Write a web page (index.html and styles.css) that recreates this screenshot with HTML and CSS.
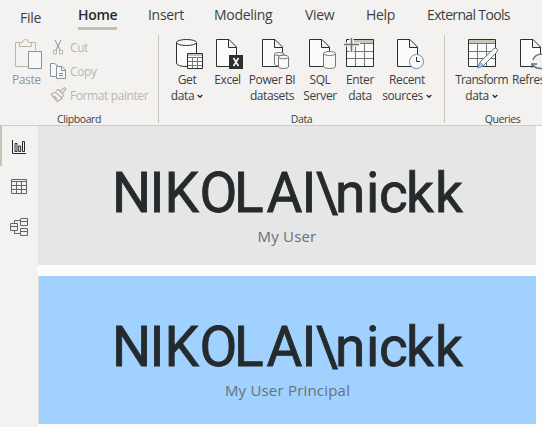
FILE: index.html
```html
<!DOCTYPE html>
<html lang="en">
<head>
<meta charset="utf-8">
<title>Report</title>
<link rel="stylesheet" href="styles.css">
</head>
<body>
<nav class="tabs">
  <span class="file">File</span><span class="active">Home</span><span>Insert</span><span>Modeling</span><span>View</span><span>Help</span><span class="tight">External Tools</span>
</nav>
<section class="ribbon">
  <div class="group clipboard">
    <div class="tools">
      <div class="button paste">
        <svg width="52" height="32" viewBox="0 38 52 32"><path class="muted" d="M21 42.500H15.500V66.500H28M30 42.500H35.500V50"/><path class="muted" d="M19.500 46.500V42.500H22.500Q22.500 39.500 25.500 39.500T28.500 42.500H31.500V46.500Z"/><path class="slate" d="M28.500 51.500H41.500V68.500H28.500Z"/></svg>
        <span>Paste</span>
      </div>
      <div class="commands">
        <div><svg width="20" height="20" viewBox="49 38 20 20"><path class="slate" d="M55 40L60.500 51M61 40L55.500 51"/><path class="muted" d="M53.500 50.500H56.500V54H53.500ZM59.500 50.500H62.500V54H59.500Z"/></svg>Cut</div>
        <div><svg width="20" height="20" viewBox="49 62 20 20"><path class="slate" d="M56 76.500H50.500V63.500H54.500L58 66M56.500 66.500H62L65.500 70V78.500H56.500ZM61.500 66.500V70.500H65M59 73.500H63M59 75.500H63"/></svg>Copy</div>
        <div><svg width="20" height="20" viewBox="49 86 20 20"><path class="muted thick" d="M51 94.500L55 92L62 98L57.500 101.500ZM54 96L57 99M56 91L58.500 89.500L63.500 95L62 97.500M60 91L64.500 87.500L66 89L62.500 93"/></svg>Format painter</div>
      </div>
    </div>
    <div class="caption">Clipboard</div>
  </div>
  <div class="group data">
    <div class="tools">
      <div class="button"><svg width="42" height="32" viewBox="166 38 42 32"><path class="paper" d="M176.500 42.500V63Q177 66.500 187 66.500L196.500 64V42.500"/><ellipse class="paper" cx="186.500" cy="42.500" rx="10" ry="3"/><path class="paper" d="M187.500 53.500H202.500V68.500H187.500Z"/><path class="bar" d="M188 54H202V56H188Z"/><path class="gray" d="M188 57.500H202M188 61.500H202M188 65.500H202M192.500 57V68M197.500 57V68"/></svg><span>Get</span><span>data<svg class="chev" viewBox="0 0 6 5"><path d="M.7 1L3 3.300L5.300 1"/></svg></span></div>
      <div class="button"><svg width="39" height="32" viewBox="208 38 39 32"><path class="paper" d="M216.500 39.500H229L236.500 47V66.500H216.500ZM228.500 39.500V47.500H236"/><path class="excel" d="M229 55H243V69H229Z"/><path class="cross" d="M233.500 58L238.500 66M238.500 58L233.500 66"/></svg><span>Excel</span></div>
      <div class="button"><svg width="50" height="32" viewBox="247 38 50 32"><path class="paper" d="M262.500 39.500H275L282.500 47V66.500H262.500ZM274.500 39.500V47.500H282"/><path class="cyl" d="M274.500 54V64Q275 66 279 66H284V54"/><ellipse class="cyl" cx="279.300" cy="54" rx="4.800" ry="1.500"/><path class="cyl" d="M278.500 57V67Q279 68.500 283.500 68.500T288.500 67V57"/><ellipse class="cyl" cx="283.500" cy="57" rx="5" ry="1.800"/></svg><span>Power BI</span><span>datasets</span></div>
      <div class="button"><svg width="46" height="32" viewBox="297 38 46 32"><path class="paper" d="M309.500 39.500H322L329.500 47V66.500H309.500ZM321.500 39.500V47.500H329"/><path class="cyl" d="M323.500 53.500V66.500Q324 68.500 329.500 68.500T335.500 66.500V53.500"/><ellipse class="cyl" cx="329.500" cy="53.500" rx="6" ry="2"/></svg><span>SQL</span><span>Server</span></div>
      <div class="button"><svg width="34" height="32" viewBox="343 38 34 32"><path class="paper" d="M346.500 39.500H373.500V66.500H346.500Z"/><path class="bar" d="M354 40H373V43H354Z"/><path class="gray" d="M347 51.500H373M347 58.500H373M355.500 44V66M364.500 44V66M354 43.500H373"/><path class="halo" d="M351.500 37V52M344 44.500H360"/><path class="plus" d="M351.500 38V52M344 44.500H359"/></svg><span>Enter</span><span>data</span></div>
      <div class="button"><svg width="60" height="32" viewBox="377 38 60 32"><path class="paper" d="M397.500 39.500H410L417.500 47V66.500H397.500ZM409.500 39.500V47.500H417"/><circle class="clock" cx="416.500" cy="61.500" r="7"/><path class="ink" d="M416.500 57V61.500H420"/></svg><span>Recent</span><span>sources<svg class="chev" viewBox="0 0 6 5"><path d="M.7 1L3 3.300L5.300 1"/></svg></span></div>
    </div>
    <div class="caption">Data</div>
  </div>
  <div class="group queries">
    <div class="tools">
      <div class="button"><svg width="60" height="32" viewBox="451 38 60 32"><path class="paper" d="M467.500 39.500H494.500V66.500H467.500Z"/><path class="bar" d="M468 40H494V43H468Z"/><path class="gray" d="M468 43.500H494M468 51.500H494M468 58.500H494M476.500 44V66M485.500 44V66"/><path class="pencil" d="M477 68L479 62L493 48.500Q495 47.500 496 49T496 52L482.500 65.500Z"/><path class="tip" d="M477 68L479 62L482.500 65.500Z"/></svg><span class="tight">Transform</span><span>data<svg class="chev" viewBox="0 0 6 5"><path d="M.7 1L3 3.300L5.300 1"/></svg></span></div>
      <div class="button refresh"><svg width="30" height="32" viewBox="512 38 30 32"><path class="paper" d="M520.500 39.500H533L540.500 47V66.500H520.500ZM532.500 39.500V47.500H540"/><circle class="halo disk" cx="540" cy="61.500" r="7"/><path class="plus" d="M533 60Q535 54 542 54M532 63V68M532 64H537M533 65Q536 69 542 68.500"/></svg><span>Refresh</span></div>
    </div>
    <div class="caption">Queries</div>
  </div>
</section>
<div class="workspace">
  <aside class="views">
    <div class="view selected"><svg width="18" height="18" viewBox="10 138 18 18"><path d="M12.500 140V153.500H26M15 143.500H17V151.500H15ZM18.700 146H20.700V151.500H18.700ZM22.500 141.500H24.500V151.500H22.500Z"/></svg></div>
    <div class="view"><svg width="18" height="18" viewBox="10 178 18 18"><path d="M11.500 179.500H26.500V193.500H11.500ZM11 181.500H27M11 185.500H27M11 189.500H27M16.500 182V193M21.500 182V193"/></svg></div>
    <div class="view"><svg width="18" height="18" viewBox="10 218 18 18"><path d="M10.500 223.500H17.500V230.500H10.500ZM11 226.500H17M20.500 218.500H27.500V225.500H20.500ZM21 221.500H27M20.500 228.500H27.500V235.500H20.500ZM21 231.500H27M14.500 223V220.500H20M14.500 231V233.500H20"/></svg></div>
  </aside>
  <main class="canvas">
    <div class="card neutral">
      <svg class="value" width="498" height="74" viewBox="38 156 498 74"><text y="212" x="112 149.500 164.500 199.500 234 266.500 301.500 315.500 335 366 379 406 435">NIKOLAI\nickk</text></svg>
      <div class="label">My User</div>
    </div>
    <div class="card blue">
      <svg class="value" width="498" height="74" viewBox="38 156 498 74"><text y="212" x="112 149.500 164.500 199.500 234 266.500 301.500 315.500 335 366 379 406 435">NIKOLAI\nickk</text></svg>
      <div class="label">My User Principal</div>
    </div>
  </main>
</div>
</body>
</html>
```
FILE: styles.css
```css
* { box-sizing: border-box; }
body {
  margin: 0;
  width: 542px;
  height: 427px;
  overflow: hidden;
  background: #f3f2f1;
  color: #3b3f42;
  font-family: "Open Sans", sans-serif;
}
svg { display: block; fill: none; stroke-width: 1; }
.tabs {
  display: grid;
  grid-template-columns: 58px 70px 66px 91px 61px 61px 1fr;
  align-items: start;
  height: 35px;
  padding: 5px 0 0 20px;
  font-size: 14px;
  line-height: 20px;
  letter-spacing: -0.3px;
  white-space: nowrap;
}
.tabs .file { padding-top: 3px; }
.tabs .active {
  width: 39px;
  height: 25px;
  border-bottom: 3px solid #c2c0b4;
  color: #252a2d;
  font-weight: 600;
}
.tight { letter-spacing: -0.65px; }
.ribbon {
  display: flex;
  height: 91px;
  border-bottom: 1px solid #cfcdc8;
  font-size: 12px;
  line-height: 16px;
  letter-spacing: -0.4px;
  white-space: nowrap;
}
.group { flex: none; height: 88px; border-right: 1px solid #c8c6ba; }
.clipboard { width: 159px; }
.data { width: 286px; }
.queries { width: 97px; border: 0; }
.tools { display: flex; height: 76px; padding-top: 3px; }
.data .tools {
  display: grid;
  grid-template-columns: 42px 39px 50px 46px 34px 60px;
  padding-left: 7px;
}
.queries .tools {
  display: grid;
  grid-template-columns: 61px 30px;
  padding-left: 6px;
}
.button { display: flex; flex-direction: column; align-items: center; }
.button > svg { margin-bottom: 2px; flex: none; }
.refresh { align-items: flex-start; }
.paste { width: 49px; align-items: flex-start; color: #8b959b; }
.paste span { padding-left: 12px; }
.commands { color: #b9b7ac; }
.commands > div { display: flex; height: 24px; line-height: 20px; gap: 1px; }
.caption {
  height: 16px;
  font-size: 10.500px;
  line-height: 16px;
  text-align: center;
}
.queries .caption { width: 115px; }
.chev {
  display: inline-block;
  width: 6px;
  height: 5px;
  margin: 0 0 1px 3px;
  stroke: #303639;
  stroke-width: 1.500;
}
.paper { fill: #fbfbfa; stroke: #292e30; }
.bar { fill: #c7c5b5; }
.gray { stroke: #73797b; }
.muted { stroke: #b9b7aa; }
.thick { stroke-width: 1.300; }
.slate { fill: #f8f8f7; stroke: #85939d; }
.excel { fill: #292e31; }
.cross { stroke: #f1f1f0; stroke-width: 1.700; }
.cyl { fill: #f8f8f7; stroke: #73797b; }
.halo { stroke: #f3f2f1; stroke-width: 4; }
.disk { fill: #f3f2f1; stroke-width: 2; }
.plus { stroke: #697275; stroke-width: 1.500; }
.clock { fill: #fbfbfa; stroke: #5e8fc0; }
.ink { stroke: #292e30; }
.pencil { fill: #f8f8f7; stroke: #6e777c; }
.tip { fill: #9ccaf2; stroke: #6a98c2; }
.workspace { display: flex; height: 301px; }
.views { width: 38px; }
.view { height: 40px; padding: 12px 0 0 10px; }
.view svg { stroke: #606769; }
.selected { border-left: 2px solid #c6c4b8; padding-left: 8px; }
.selected svg { stroke: #252a2d; }
.canvas { width: 504px; background: #fdfdfd; }
.card { width: 498px; text-align: center; }
.neutral { height: 139px; padding-top: 30px; background: #e6e6e6; }
.blue {
  height: 148px;
  margin-top: 11px;
  padding-top: 34px;
  border-left: 1px solid #dcdfe2;
  background: #a1d1ff;
}
.blue .value { margin-left: -1px; }
.value text {
  fill: #252a2d;
  stroke: #252a2d;
  stroke-width: 0.800;
  font-family: Roboto, sans-serif;
  font-size: 55px;
}
.label {
  color: #687078;
  font-size: 15px;
  line-height: 22px;
  letter-spacing: 0.2px;
  margin-top: -5px;
}
```
